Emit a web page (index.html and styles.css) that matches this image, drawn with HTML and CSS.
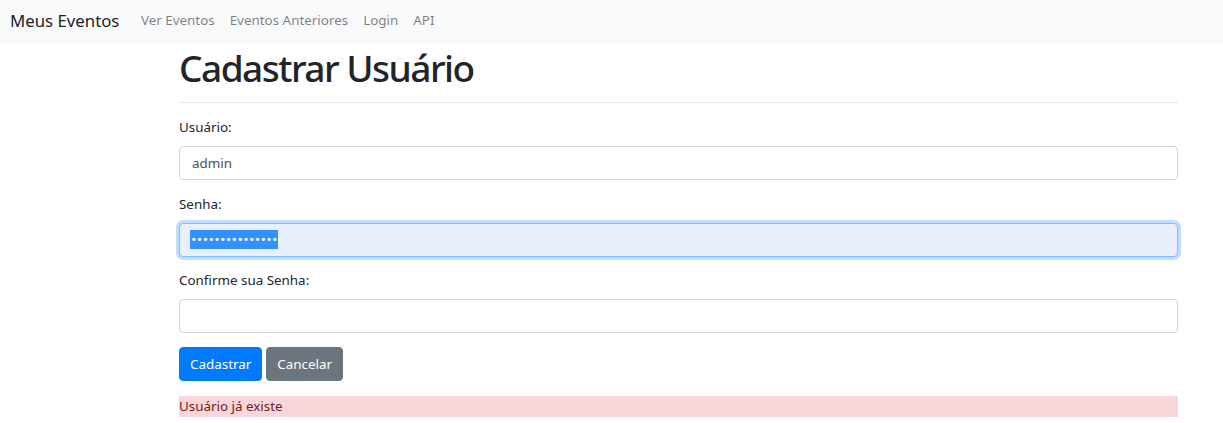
FILE: index.html
```html
<!DOCTYPE html>
<html lang="pt-BR">
<head>
<meta charset="utf-8">
<title>Cadastrar Usuário</title>
<link rel="stylesheet" href="styles.css">
</head>
<body>
<nav class="navbar">
  <a class="brand" href="#">Meus Eventos</a>
  <ul class="nav">
    <li><a class="nav-link" href="#">Ver Eventos</a></li>
    <li><a class="nav-link" href="#">Eventos Anteriores</a></li>
    <li><a class="nav-link" href="#">Login</a></li>
    <li><a class="nav-link" href="#">API</a></li>
  </ul>
</nav>
<main class="page">
  <h1 class="title">Cadastrar Usuário</h1>
  <hr class="divider">
  <form class="form">
    <div class="form-group">
      <label class="label">Usuário:</label>
      <div class="form-control">admin</div>
    </div>
    <div class="form-group">
      <label class="label">Senha:</label>
      <div class="form-control focused"><span class="selection">•••••••••••••••</span></div>
    </div>
    <div class="form-group">
      <label class="label">Confirme sua Senha:</label>
      <div class="form-control"></div>
    </div>
    <div class="actions">
      <button type="button" class="btn btn-primary">Cadastrar</button>
      <button type="button" class="btn btn-secondary">Cancelar</button>
    </div>
  </form>
  <div class="alert">Usuário já existe</div>
</main>
</body>
</html>
```
FILE: styles.css
```css
* { box-sizing: border-box; }
body {
  margin: 0;
  font-family: "Noto Sans", "Open Sans", sans-serif;
  font-size: 13.4px;
  line-height: 1.5;
  color: #212529;
  background: #fff;
}
a { text-decoration: none; }

.navbar {
  display: flex;
  align-items: center;
  height: 44px;
  padding: 0 10px 3px;
  background: #f8f9fa;
}
.brand {
  font-size: 16.8px;
  color: rgba(0, 0, 0, 0.9);
  margin-right: 14px;
}
.nav {
  display: flex;
  list-style: none;
  margin: 0;
  padding: 0;
}
.nav-link {
  display: block;
  padding: 0 7.5px;
  color: rgba(0, 0, 0, 0.5);
}

.page {
  margin: 0 45px 0 179px;
}
.title {
  margin: 0;
  font-size: 37px;
  font-weight: 500;
  line-height: 47px;
  letter-spacing: -1.5px;
}
.divider {
  margin: 11px 0 14px;
  border: 0;
  border-top: 1px solid rgba(0, 0, 0, 0.1);
}
.form-group {
  margin-bottom: 13.5px;
}
.label {
  display: block;
  line-height: 21px;
  margin-bottom: 8px;
}
.form-control {
  height: 34px;
  padding: 6px 12px;
  line-height: 20px;
  color: #495057;
  background: #fff;
  border: 1px solid #ced4da;
  border-radius: 4px;
}
.form-control.focused {
  background: #e8f0fe;
  border-color: #80bdff;
  box-shadow: 0 0 0 3px rgba(0, 123, 255, 0.25);
  padding: 6px 10px;
}
.selection {
  display: inline-block;
  width: 88px;
  height: 19px;
  background: #3390ff;
  color: #fff;
  font-family: "DejaVu Sans", sans-serif;
  font-size: 11px;
  line-height: 19px;
  letter-spacing: -0.7px;
  text-align: center;
  white-space: nowrap;
  overflow: hidden;
  vertical-align: top;
}
.actions {
  display: flex;
  gap: 4px;
}
.btn {
  height: 34px;
  padding: 0 10px;
  font-family: inherit;
  font-size: 13.4px;
  color: #fff;
  border: 1px solid transparent;
  border-radius: 4px;
}
.btn-primary { background: #007bff; border-color: #007bff; }
.btn-secondary { background: #6c757d; border-color: #6c757d; }

.alert {
  margin-top: 15px;
  line-height: 21px;
  background: #f8d7da;
  color: #721c24;
}
```
